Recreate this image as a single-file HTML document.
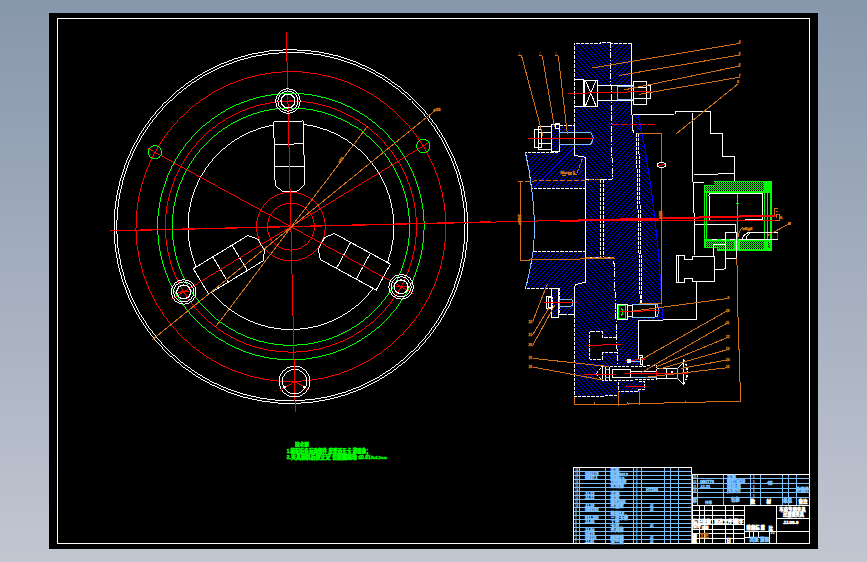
<!DOCTYPE html>
<html lang="zh"><head><meta charset="utf-8"><title>CAD drawing</title>
<style>
html,body{margin:0;padding:0;}
body{width:867px;height:562px;overflow:hidden;background:linear-gradient(#8797ac,#c2c6d1);font-family:"Liberation Sans","Noto Sans CJK SC",sans-serif;}
svg{display:block;}
text{font-family:"Liberation Sans","Noto Sans CJK SC",sans-serif;}
</style></head><body>
<svg shape-rendering="crispEdges" width="867" height="562" viewBox="0 0 867 562">
<defs>
<linearGradient id="bg" x1="0" y1="0" x2="0" y2="1"><stop offset="0" stop-color="#8797ac"/><stop offset="1" stop-color="#c2c6d1"/></linearGradient>
<pattern id="hG" width="2" height="2" patternUnits="userSpaceOnUse"><rect width="2" height="2" fill="#00ff00"/><rect width="1" height="1" fill="#000"/><rect x="1" y="1" width="1" height="1" fill="#000"/></pattern>
</defs>
<rect width="867" height="562" fill="url(#bg)"/>
<rect x="49" y="13" width="769" height="536" fill="#000"/>
<rect x="57.5" y="18.5" width="752" height="525" fill="none" stroke="#fff" stroke-width="1"/>
<g transform="rotate(-1.35 290.9 226.6)">
<circle cx="290.90" cy="226.60" r="176.90" fill="none" stroke="#ffffff" stroke-width="1"/>
<circle cx="290.90" cy="226.60" r="174.20" fill="none" stroke="#ffffff" stroke-width="1"/>
<circle cx="290.90" cy="226.60" r="155.00" fill="none" stroke="#ff0000" stroke-width="1"/>
<circle cx="290.90" cy="226.60" r="133.30" fill="none" stroke="#00ff00" stroke-width="1"/>
<circle cx="290.90" cy="226.60" r="125.60" fill="none" stroke="#ff0000" stroke-width="1"/>
<circle cx="290.90" cy="226.60" r="118.70" fill="none" stroke="#00ff00" stroke-width="1"/>
<circle cx="290.90" cy="226.60" r="34.40" fill="none" stroke="#ff0000" stroke-width="1"/>
<circle cx="290.90" cy="226.60" r="23.50" fill="none" stroke="#ff0000" stroke-width="1"/>
<path d="M276.10,124.67 A103.0,103.0 0 0 0 195.23,264.75" fill="none" stroke="#ffffff" stroke-width="1" />
<path d="M210.03,290.38 A103.0,103.0 0 0 0 371.77,290.38" fill="none" stroke="#ffffff" stroke-width="1" />
<path d="M386.57,264.75 A103.0,103.0 0 0 0 305.70,124.67" fill="none" stroke="#ffffff" stroke-width="1" />
<g transform="rotate(0 290.9 226.6)">
<polygon points="284.40,191.80 276.10,185.10 276.10,121.30 305.70,121.30 305.70,185.10 297.40,191.80" fill="none" stroke="#ffffff" stroke-width="1" />
<line x1="276.10" y1="144.10" x2="305.70" y2="144.10" stroke="#ffffff" stroke-width="1" />
<line x1="276.10" y1="166.60" x2="305.70" y2="166.60" stroke="#ffffff" stroke-width="1" />
</g>
<g transform="rotate(120 290.9 226.6)">
<polygon points="284.40,191.80 276.10,185.10 276.10,121.30 305.70,121.30 305.70,185.10 297.40,191.80" fill="none" stroke="#ffffff" stroke-width="1" />
<line x1="276.10" y1="144.10" x2="305.70" y2="144.10" stroke="#ffffff" stroke-width="1" />
<line x1="276.10" y1="166.60" x2="305.70" y2="166.60" stroke="#ffffff" stroke-width="1" />
</g>
<g transform="rotate(240 290.9 226.6)">
<polygon points="284.40,191.80 276.10,185.10 276.10,121.30 305.70,121.30 305.70,185.10 297.40,191.80" fill="none" stroke="#ffffff" stroke-width="1" />
<line x1="276.10" y1="144.10" x2="305.70" y2="144.10" stroke="#ffffff" stroke-width="1" />
<line x1="276.10" y1="166.60" x2="305.70" y2="166.60" stroke="#ffffff" stroke-width="1" />
</g>
<line x1="109.90" y1="226.60" x2="490.90" y2="226.60" stroke="#ff0000" stroke-width="1.3" />
<line x1="290.90" y1="31.60" x2="290.90" y2="411.60" stroke="#ff0000" stroke-width="1" />
<line x1="149.74" y1="145.10" x2="412.14" y2="296.60" stroke="#ff0000" stroke-width="1" />
<line x1="169.66" y1="296.60" x2="432.06" y2="145.10" stroke="#ff0000" stroke-width="1" />
<circle cx="425.13" cy="149.10" r="6.70" fill="none" stroke="#00ff00" stroke-width="1"/>
<circle cx="156.67" cy="149.10" r="6.70" fill="none" stroke="#00ff00" stroke-width="1"/>
<circle cx="290.90" cy="381.60" r="15.50" fill="none" stroke="#ffffff" stroke-width="1"/>
<circle cx="290.90" cy="381.60" r="12.30" fill="none" stroke="#ffffff" stroke-width="1"/>
<line x1="290.90" y1="381.60" x2="290.90" y2="364.60" stroke="#ff0000" stroke-width="1" />
<line x1="290.90" y1="381.60" x2="276.18" y2="390.10" stroke="#ff0000" stroke-width="1" />
<line x1="290.90" y1="381.60" x2="305.62" y2="390.10" stroke="#ff0000" stroke-width="1" />
<line x1="282.24" y1="386.60" x2="280.07" y2="387.85" stroke="#ffffff" stroke-width="2" />
<line x1="299.56" y1="386.60" x2="301.73" y2="387.85" stroke="#ffffff" stroke-width="2" />
<circle cx="290.90" cy="101.00" r="12.30" fill="none" stroke="#ffffff" stroke-width="1"/>
<circle cx="290.90" cy="101.00" r="10.10" fill="none" stroke="#ffffff" stroke-width="1"/>
<circle cx="290.90" cy="101.00" r="6.90" fill="none" stroke="#ffffff" stroke-width="1.3"/>
<line x1="285.40" y1="101.00" x2="296.40" y2="101.00" stroke="#ff0000" stroke-width="1" />
<circle cx="182.13" cy="289.40" r="12.30" fill="none" stroke="#ffffff" stroke-width="1"/>
<circle cx="182.13" cy="289.40" r="10.10" fill="none" stroke="#ffffff" stroke-width="1"/>
<circle cx="182.13" cy="289.40" r="6.90" fill="none" stroke="#ffffff" stroke-width="1.3"/>
<line x1="176.63" y1="289.40" x2="187.63" y2="289.40" stroke="#ff0000" stroke-width="1" />
<circle cx="399.67" cy="289.40" r="12.30" fill="none" stroke="#ffffff" stroke-width="1"/>
<circle cx="399.67" cy="289.40" r="10.10" fill="none" stroke="#ffffff" stroke-width="1"/>
<circle cx="399.67" cy="289.40" r="6.90" fill="none" stroke="#ffffff" stroke-width="1.3"/>
<line x1="394.17" y1="289.40" x2="405.17" y2="289.40" stroke="#ff0000" stroke-width="1" />
</g>
<line x1="367.50" y1="126.25" x2="215.50" y2="327.00" stroke="#d07018" stroke-width="1" />
<line x1="436.25" y1="109.50" x2="152.00" y2="340.00" stroke="#d07018" stroke-width="1" />
<text x="337.5" y="163" fill="#d07018" stroke="#d07018" stroke-width="0.4" font-size="3.6" font-weight="bold" transform="rotate(-53 339 161)">ø25</text>
<text x="433.5" y="111" fill="#d07018" stroke="#d07018" stroke-width="0.45" font-size="4" font-weight="bold">ø35</text>
<text x="295.00" y="446.00" fill="#00ff00" stroke="#00ff00" stroke-width="0.45" font-size="4.6" font-weight="bold" >技术要</text>
<text x="286.80" y="452.60" fill="#00ff00" stroke="#00ff00" stroke-width="0.55" font-size="6" font-weight="bold" textLength="84" lengthAdjust="spacingAndGlyphs">1.装配后各运动部件 应灵活无卡 滞现象；</text>
<text x="286.80" y="458.60" fill="#00ff00" stroke="#00ff00" stroke-width="0.55" font-size="6" font-weight="bold" textLength="84" lengthAdjust="spacingAndGlyphs">2.夹具装机后校正定 位面圆跳动 ≤0.01</text>
<text x="371.00" y="458.80" fill="#00ff00" stroke="#00ff00" stroke-width="0.3" font-size="3.6" font-weight="bold" >Ra3.2mm</text>
<clipPath id="cp1"><path d="M559.2,125.7 L574,125.7 L574,155.3 L585.5,157.2 L585.5,188.1 L531.5,188.1 Q529.5,170 525.3,152.2 L559.2,152.2 Z"/></clipPath>
<path d="M524.30,124.70h1.0L460.90,189.10h-1.0ZM528.80,124.70h1.0L465.40,189.10h-1.0ZM533.30,124.70h1.0L469.90,189.10h-1.0ZM537.80,124.70h1.0L474.40,189.10h-1.0ZM542.30,124.70h1.0L478.90,189.10h-1.0ZM546.80,124.70h1.0L483.40,189.10h-1.0ZM551.30,124.70h1.0L487.90,189.10h-1.0ZM555.80,124.70h1.0L492.40,189.10h-1.0ZM560.30,124.70h1.0L496.90,189.10h-1.0ZM564.80,124.70h1.0L501.40,189.10h-1.0ZM569.30,124.70h1.0L505.90,189.10h-1.0ZM573.80,124.70h1.0L510.40,189.10h-1.0ZM578.30,124.70h1.0L514.90,189.10h-1.0ZM582.80,124.70h1.0L519.40,189.10h-1.0ZM587.30,124.70h1.0L523.90,189.10h-1.0ZM591.80,124.70h1.0L528.40,189.10h-1.0ZM596.30,124.70h1.0L532.90,189.10h-1.0ZM600.80,124.70h1.0L537.40,189.10h-1.0ZM605.30,124.70h1.0L541.90,189.10h-1.0ZM609.80,124.70h1.0L546.40,189.10h-1.0ZM614.30,124.70h1.0L550.90,189.10h-1.0ZM618.80,124.70h1.0L555.40,189.10h-1.0ZM623.30,124.70h1.0L559.90,189.10h-1.0ZM627.80,124.70h1.0L564.40,189.10h-1.0ZM632.30,124.70h1.0L568.90,189.10h-1.0ZM636.80,124.70h1.0L573.40,189.10h-1.0ZM641.30,124.70h1.0L577.90,189.10h-1.0ZM645.80,124.70h1.0L582.40,189.10h-1.0ZM650.30,124.70h1.0L586.90,189.10h-1.0Z" fill="#0000ff" stroke="none" clip-path="url(#cp1)"/>
<clipPath id="cp2"><path d="M533,251.8 L585.5,251.8 L585.5,282.3 L575.8,284.5 L574,288 L574,314.5 L559.2,314.5 L559.2,288.3 L525.5,288.3 Q530.5,270 533,251.8 Z"/></clipPath>
<path d="M524.50,250.80h1.0L460.80,315.50h-1.0ZM529.00,250.80h1.0L465.30,315.50h-1.0ZM533.50,250.80h1.0L469.80,315.50h-1.0ZM538.00,250.80h1.0L474.30,315.50h-1.0ZM542.50,250.80h1.0L478.80,315.50h-1.0ZM547.00,250.80h1.0L483.30,315.50h-1.0ZM551.50,250.80h1.0L487.80,315.50h-1.0ZM556.00,250.80h1.0L492.30,315.50h-1.0ZM560.50,250.80h1.0L496.80,315.50h-1.0ZM565.00,250.80h1.0L501.30,315.50h-1.0ZM569.50,250.80h1.0L505.80,315.50h-1.0ZM574.00,250.80h1.0L510.30,315.50h-1.0ZM578.50,250.80h1.0L514.80,315.50h-1.0ZM583.00,250.80h1.0L519.30,315.50h-1.0ZM587.50,250.80h1.0L523.80,315.50h-1.0ZM592.00,250.80h1.0L528.30,315.50h-1.0ZM596.50,250.80h1.0L532.80,315.50h-1.0ZM601.00,250.80h1.0L537.30,315.50h-1.0ZM605.50,250.80h1.0L541.80,315.50h-1.0ZM610.00,250.80h1.0L546.30,315.50h-1.0ZM614.50,250.80h1.0L550.80,315.50h-1.0ZM619.00,250.80h1.0L555.30,315.50h-1.0ZM623.50,250.80h1.0L559.80,315.50h-1.0ZM628.00,250.80h1.0L564.30,315.50h-1.0ZM632.50,250.80h1.0L568.80,315.50h-1.0ZM637.00,250.80h1.0L573.30,315.50h-1.0ZM641.50,250.80h1.0L577.80,315.50h-1.0ZM646.00,250.80h1.0L582.30,315.50h-1.0ZM650.50,250.80h1.0L586.80,315.50h-1.0Z" fill="#0000ff" stroke="none" clip-path="url(#cp2)"/>
<clipPath id="cp3"><path d="M574.00,43.30 L600.00,43.30 L600.00,42.00 L610.40,42.00 L612.30,179.40 L600.90,179.40 L600.90,257.40 L613.80,257.40 L618.50,395.50 L574.50,397.00 L574.00,288.00 L575.80,284.50 L585.50,282.30 L585.50,157.20 L574.00,155.30 Z"/></clipPath>
<path d="M216.00,41.00h1.0L574.00,398.00h-1.0ZM220.50,41.00h1.0L578.50,398.00h-1.0ZM225.00,41.00h1.0L583.00,398.00h-1.0ZM229.50,41.00h1.0L587.50,398.00h-1.0ZM234.00,41.00h1.0L592.00,398.00h-1.0ZM238.50,41.00h1.0L596.50,398.00h-1.0ZM243.00,41.00h1.0L601.00,398.00h-1.0ZM247.50,41.00h1.0L605.50,398.00h-1.0ZM252.00,41.00h1.0L610.00,398.00h-1.0ZM256.50,41.00h1.0L614.50,398.00h-1.0ZM261.00,41.00h1.0L619.00,398.00h-1.0ZM265.50,41.00h1.0L623.50,398.00h-1.0ZM270.00,41.00h1.0L628.00,398.00h-1.0ZM274.50,41.00h1.0L632.50,398.00h-1.0ZM279.00,41.00h1.0L637.00,398.00h-1.0ZM283.50,41.00h1.0L641.50,398.00h-1.0ZM288.00,41.00h1.0L646.00,398.00h-1.0ZM292.50,41.00h1.0L650.50,398.00h-1.0ZM297.00,41.00h1.0L655.00,398.00h-1.0ZM301.50,41.00h1.0L659.50,398.00h-1.0ZM306.00,41.00h1.0L664.00,398.00h-1.0ZM310.50,41.00h1.0L668.50,398.00h-1.0ZM315.00,41.00h1.0L673.00,398.00h-1.0ZM319.50,41.00h1.0L677.50,398.00h-1.0ZM324.00,41.00h1.0L682.00,398.00h-1.0ZM328.50,41.00h1.0L686.50,398.00h-1.0ZM333.00,41.00h1.0L691.00,398.00h-1.0ZM337.50,41.00h1.0L695.50,398.00h-1.0ZM342.00,41.00h1.0L700.00,398.00h-1.0ZM346.50,41.00h1.0L704.50,398.00h-1.0ZM351.00,41.00h1.0L709.00,398.00h-1.0ZM355.50,41.00h1.0L713.50,398.00h-1.0ZM360.00,41.00h1.0L718.00,398.00h-1.0ZM364.50,41.00h1.0L722.50,398.00h-1.0ZM369.00,41.00h1.0L727.00,398.00h-1.0ZM373.50,41.00h1.0L731.50,398.00h-1.0ZM378.00,41.00h1.0L736.00,398.00h-1.0ZM382.50,41.00h1.0L740.50,398.00h-1.0ZM387.00,41.00h1.0L745.00,398.00h-1.0ZM391.50,41.00h1.0L749.50,398.00h-1.0ZM396.00,41.00h1.0L754.00,398.00h-1.0ZM400.50,41.00h1.0L758.50,398.00h-1.0ZM405.00,41.00h1.0L763.00,398.00h-1.0ZM409.50,41.00h1.0L767.50,398.00h-1.0ZM414.00,41.00h1.0L772.00,398.00h-1.0ZM418.50,41.00h1.0L776.50,398.00h-1.0ZM423.00,41.00h1.0L781.00,398.00h-1.0ZM427.50,41.00h1.0L785.50,398.00h-1.0ZM432.00,41.00h1.0L790.00,398.00h-1.0ZM436.50,41.00h1.0L794.50,398.00h-1.0ZM441.00,41.00h1.0L799.00,398.00h-1.0ZM445.50,41.00h1.0L803.50,398.00h-1.0ZM450.00,41.00h1.0L808.00,398.00h-1.0ZM454.50,41.00h1.0L812.50,398.00h-1.0ZM459.00,41.00h1.0L817.00,398.00h-1.0ZM463.50,41.00h1.0L821.50,398.00h-1.0ZM468.00,41.00h1.0L826.00,398.00h-1.0ZM472.50,41.00h1.0L830.50,398.00h-1.0ZM477.00,41.00h1.0L835.00,398.00h-1.0ZM481.50,41.00h1.0L839.50,398.00h-1.0ZM486.00,41.00h1.0L844.00,398.00h-1.0ZM490.50,41.00h1.0L848.50,398.00h-1.0ZM495.00,41.00h1.0L853.00,398.00h-1.0ZM499.50,41.00h1.0L857.50,398.00h-1.0ZM504.00,41.00h1.0L862.00,398.00h-1.0ZM508.50,41.00h1.0L866.50,398.00h-1.0ZM513.00,41.00h1.0L871.00,398.00h-1.0ZM517.50,41.00h1.0L875.50,398.00h-1.0ZM522.00,41.00h1.0L880.00,398.00h-1.0ZM526.50,41.00h1.0L884.50,398.00h-1.0ZM531.00,41.00h1.0L889.00,398.00h-1.0ZM535.50,41.00h1.0L893.50,398.00h-1.0ZM540.00,41.00h1.0L898.00,398.00h-1.0ZM544.50,41.00h1.0L902.50,398.00h-1.0ZM549.00,41.00h1.0L907.00,398.00h-1.0ZM553.50,41.00h1.0L911.50,398.00h-1.0ZM558.00,41.00h1.0L916.00,398.00h-1.0ZM562.50,41.00h1.0L920.50,398.00h-1.0ZM567.00,41.00h1.0L925.00,398.00h-1.0ZM571.50,41.00h1.0L929.50,398.00h-1.0ZM576.00,41.00h1.0L934.00,398.00h-1.0ZM580.50,41.00h1.0L938.50,398.00h-1.0ZM585.00,41.00h1.0L943.00,398.00h-1.0ZM589.50,41.00h1.0L947.50,398.00h-1.0ZM594.00,41.00h1.0L952.00,398.00h-1.0ZM598.50,41.00h1.0L956.50,398.00h-1.0ZM603.00,41.00h1.0L961.00,398.00h-1.0ZM607.50,41.00h1.0L965.50,398.00h-1.0ZM612.00,41.00h1.0L970.00,398.00h-1.0ZM616.50,41.00h1.0L974.50,398.00h-1.0Z" fill="#0000ff" stroke="none" clip-path="url(#cp3)"/>
<clipPath id="cp4"><path d="M610.40,43.30 L631.70,43.30 L632.00,115.00 L633.20,133.30 L636.00,133.30 L640.40,320.00 L638.80,320.00 L638.80,365.50 L617.60,365.50 L613.80,257.40 L603.70,257.40 L603.70,179.40 L612.30,179.40 Z"/></clipPath>
<path d="M602.70,42.30h1.0L279.50,366.50h-1.0ZM607.20,42.30h1.0L284.00,366.50h-1.0ZM611.70,42.30h1.0L288.50,366.50h-1.0ZM616.20,42.30h1.0L293.00,366.50h-1.0ZM620.70,42.30h1.0L297.50,366.50h-1.0ZM625.20,42.30h1.0L302.00,366.50h-1.0ZM629.70,42.30h1.0L306.50,366.50h-1.0ZM634.20,42.30h1.0L311.00,366.50h-1.0ZM638.70,42.30h1.0L315.50,366.50h-1.0ZM643.20,42.30h1.0L320.00,366.50h-1.0ZM647.70,42.30h1.0L324.50,366.50h-1.0ZM652.20,42.30h1.0L329.00,366.50h-1.0ZM656.70,42.30h1.0L333.50,366.50h-1.0ZM661.20,42.30h1.0L338.00,366.50h-1.0ZM665.70,42.30h1.0L342.50,366.50h-1.0ZM670.20,42.30h1.0L347.00,366.50h-1.0ZM674.70,42.30h1.0L351.50,366.50h-1.0ZM679.20,42.30h1.0L356.00,366.50h-1.0ZM683.70,42.30h1.0L360.50,366.50h-1.0ZM688.20,42.30h1.0L365.00,366.50h-1.0ZM692.70,42.30h1.0L369.50,366.50h-1.0ZM697.20,42.30h1.0L374.00,366.50h-1.0ZM701.70,42.30h1.0L378.50,366.50h-1.0ZM706.20,42.30h1.0L383.00,366.50h-1.0ZM710.70,42.30h1.0L387.50,366.50h-1.0ZM715.20,42.30h1.0L392.00,366.50h-1.0ZM719.70,42.30h1.0L396.50,366.50h-1.0ZM724.20,42.30h1.0L401.00,366.50h-1.0ZM728.70,42.30h1.0L405.50,366.50h-1.0ZM733.20,42.30h1.0L410.00,366.50h-1.0ZM737.70,42.30h1.0L414.50,366.50h-1.0ZM742.20,42.30h1.0L419.00,366.50h-1.0ZM746.70,42.30h1.0L423.50,366.50h-1.0ZM751.20,42.30h1.0L428.00,366.50h-1.0ZM755.70,42.30h1.0L432.50,366.50h-1.0ZM760.20,42.30h1.0L437.00,366.50h-1.0ZM764.70,42.30h1.0L441.50,366.50h-1.0ZM769.20,42.30h1.0L446.00,366.50h-1.0ZM773.70,42.30h1.0L450.50,366.50h-1.0ZM778.20,42.30h1.0L455.00,366.50h-1.0ZM782.70,42.30h1.0L459.50,366.50h-1.0ZM787.20,42.30h1.0L464.00,366.50h-1.0ZM791.70,42.30h1.0L468.50,366.50h-1.0ZM796.20,42.30h1.0L473.00,366.50h-1.0ZM800.70,42.30h1.0L477.50,366.50h-1.0ZM805.20,42.30h1.0L482.00,366.50h-1.0ZM809.70,42.30h1.0L486.50,366.50h-1.0ZM814.20,42.30h1.0L491.00,366.50h-1.0ZM818.70,42.30h1.0L495.50,366.50h-1.0ZM823.20,42.30h1.0L500.00,366.50h-1.0ZM827.70,42.30h1.0L504.50,366.50h-1.0ZM832.20,42.30h1.0L509.00,366.50h-1.0ZM836.70,42.30h1.0L513.50,366.50h-1.0ZM841.20,42.30h1.0L518.00,366.50h-1.0ZM845.70,42.30h1.0L522.50,366.50h-1.0ZM850.20,42.30h1.0L527.00,366.50h-1.0ZM854.70,42.30h1.0L531.50,366.50h-1.0ZM859.20,42.30h1.0L536.00,366.50h-1.0ZM863.70,42.30h1.0L540.50,366.50h-1.0ZM868.20,42.30h1.0L545.00,366.50h-1.0ZM872.70,42.30h1.0L549.50,366.50h-1.0ZM877.20,42.30h1.0L554.00,366.50h-1.0ZM881.70,42.30h1.0L558.50,366.50h-1.0ZM886.20,42.30h1.0L563.00,366.50h-1.0ZM890.70,42.30h1.0L567.50,366.50h-1.0ZM895.20,42.30h1.0L572.00,366.50h-1.0ZM899.70,42.30h1.0L576.50,366.50h-1.0ZM904.20,42.30h1.0L581.00,366.50h-1.0ZM908.70,42.30h1.0L585.50,366.50h-1.0ZM913.20,42.30h1.0L590.00,366.50h-1.0ZM917.70,42.30h1.0L594.50,366.50h-1.0ZM922.20,42.30h1.0L599.00,366.50h-1.0ZM926.70,42.30h1.0L603.50,366.50h-1.0ZM931.20,42.30h1.0L608.00,366.50h-1.0ZM935.70,42.30h1.0L612.50,366.50h-1.0ZM940.20,42.30h1.0L617.00,366.50h-1.0ZM944.70,42.30h1.0L621.50,366.50h-1.0ZM949.20,42.30h1.0L626.00,366.50h-1.0ZM953.70,42.30h1.0L630.50,366.50h-1.0ZM958.20,42.30h1.0L635.00,366.50h-1.0ZM962.70,42.30h1.0L639.50,366.50h-1.0Z" fill="#0000ff" stroke="none" clip-path="url(#cp4)"/>
<clipPath id="cp5"><path d="M618.50,381.00 L645.30,381.00 L645.30,391.00 L618.50,395.50 Z"/></clipPath>
<path d="M617.50,380.00h1.0L602.00,396.50h-1.0ZM622.00,380.00h1.0L606.50,396.50h-1.0ZM626.50,380.00h1.0L611.00,396.50h-1.0ZM631.00,380.00h1.0L615.50,396.50h-1.0ZM635.50,380.00h1.0L620.00,396.50h-1.0ZM640.00,380.00h1.0L624.50,396.50h-1.0ZM644.50,380.00h1.0L629.00,396.50h-1.0ZM649.00,380.00h1.0L633.50,396.50h-1.0ZM653.50,380.00h1.0L638.00,396.50h-1.0ZM658.00,380.00h1.0L642.50,396.50h-1.0ZM662.50,380.00h1.0L647.00,396.50h-1.0Z" fill="#0000ff" stroke="none" clip-path="url(#cp5)"/>
<clipPath id="cp6"><path d="M634,115.5 L638.5,115.5 Q658.4,210 662.6,320.7 L640.4,320.7 L636,133.3 Z"/></clipPath>
<path d="M425.80,114.50h1.0L634.00,321.70h-1.0ZM430.30,114.50h1.0L638.50,321.70h-1.0ZM434.80,114.50h1.0L643.00,321.70h-1.0ZM439.30,114.50h1.0L647.50,321.70h-1.0ZM443.80,114.50h1.0L652.00,321.70h-1.0ZM448.30,114.50h1.0L656.50,321.70h-1.0ZM452.80,114.50h1.0L661.00,321.70h-1.0ZM457.30,114.50h1.0L665.50,321.70h-1.0ZM461.80,114.50h1.0L670.00,321.70h-1.0ZM466.30,114.50h1.0L674.50,321.70h-1.0ZM470.80,114.50h1.0L679.00,321.70h-1.0ZM475.30,114.50h1.0L683.50,321.70h-1.0ZM479.80,114.50h1.0L688.00,321.70h-1.0ZM484.30,114.50h1.0L692.50,321.70h-1.0ZM488.80,114.50h1.0L697.00,321.70h-1.0ZM493.30,114.50h1.0L701.50,321.70h-1.0ZM497.80,114.50h1.0L706.00,321.70h-1.0ZM502.30,114.50h1.0L710.50,321.70h-1.0ZM506.80,114.50h1.0L715.00,321.70h-1.0ZM511.30,114.50h1.0L719.50,321.70h-1.0ZM515.80,114.50h1.0L724.00,321.70h-1.0ZM520.30,114.50h1.0L728.50,321.70h-1.0ZM524.80,114.50h1.0L733.00,321.70h-1.0ZM529.30,114.50h1.0L737.50,321.70h-1.0ZM533.80,114.50h1.0L742.00,321.70h-1.0ZM538.30,114.50h1.0L746.50,321.70h-1.0ZM542.80,114.50h1.0L751.00,321.70h-1.0ZM547.30,114.50h1.0L755.50,321.70h-1.0ZM551.80,114.50h1.0L760.00,321.70h-1.0ZM556.30,114.50h1.0L764.50,321.70h-1.0ZM560.80,114.50h1.0L769.00,321.70h-1.0ZM565.30,114.50h1.0L773.50,321.70h-1.0ZM569.80,114.50h1.0L778.00,321.70h-1.0ZM574.30,114.50h1.0L782.50,321.70h-1.0ZM578.80,114.50h1.0L787.00,321.70h-1.0ZM583.30,114.50h1.0L791.50,321.70h-1.0ZM587.80,114.50h1.0L796.00,321.70h-1.0ZM592.30,114.50h1.0L800.50,321.70h-1.0ZM596.80,114.50h1.0L805.00,321.70h-1.0ZM601.30,114.50h1.0L809.50,321.70h-1.0ZM605.80,114.50h1.0L814.00,321.70h-1.0ZM610.30,114.50h1.0L818.50,321.70h-1.0ZM614.80,114.50h1.0L823.00,321.70h-1.0ZM619.30,114.50h1.0L827.50,321.70h-1.0ZM623.80,114.50h1.0L832.00,321.70h-1.0ZM628.30,114.50h1.0L836.50,321.70h-1.0ZM632.80,114.50h1.0L841.00,321.70h-1.0ZM637.30,114.50h1.0L845.50,321.70h-1.0ZM641.80,114.50h1.0L850.00,321.70h-1.0ZM646.30,114.50h1.0L854.50,321.70h-1.0ZM650.80,114.50h1.0L859.00,321.70h-1.0ZM655.30,114.50h1.0L863.50,321.70h-1.0ZM659.80,114.50h1.0L868.00,321.70h-1.0Z" fill="#0000ff" stroke="none" clip-path="url(#cp6)"/>
<rect x="574.00" y="79.00" width="23.10" height="27.80" fill="#000"/>
<rect x="597.00" y="85.10" width="36.00" height="14.90" fill="#000"/>
<rect x="574.00" y="132.20" width="16.70" height="12.10" fill="#000"/>
<rect x="559.20" y="132.20" width="14.80" height="12.10" fill="#000"/>
<rect x="589.70" y="331.40" width="13.00" height="28.10" fill="#000"/>
<rect x="602.70" y="337.40" width="14.30" height="14.70" fill="#000"/>
<rect x="559.20" y="299.40" width="16.80" height="6.60" fill="#000"/>
<rect x="632.00" y="304.00" width="26.00" height="13.00" fill="#000"/>
<rect x="619.00" y="304.00" width="13.00" height="14.00" fill="#000"/>
<rect x="597.00" y="366.00" width="93.00" height="15.00" fill="#000"/>
<path d="M559.2,125.7 L574,125.7 L574,155.3 L585.5,157.2 L585.5,188.1 L531.5,188.1 Q529.5,170 525.3,152.2 L559.2,152.2" fill="none" stroke="#ffffff" stroke-width="1" stroke-dasharray="3.5 1"/>
<path d="M533,251.8 L585.5,251.8 L585.5,282.3 L575.8,284.5 L574,288 L574,314.5 L559.2,314.5 L559.2,288.3 L525.5,288.3 Q530.5,270 533,251.8" fill="none" stroke="#ffffff" stroke-width="1" stroke-dasharray="3.5 1"/>
<path d="M525.3,152.2 Q529.5,170 531.5,188.1 Q536.5,220 533,251.8 Q530.5,270 525.5,288.3" fill="none" stroke="#7cc0ff" stroke-width="1" />
<polyline points="585.50,157.20 574.00,155.30 574.00,43.30 600.00,43.30 600.00,42.00 610.40,42.00 610.40,43.30 631.70,43.30" fill="none" stroke="#ffffff" stroke-width="1" stroke-dasharray="3.5 1"/>
<line x1="631.70" y1="43.30" x2="632.00" y2="115.00" stroke="#ffffff" stroke-width="1" />
<polyline points="574.00,288.00 574.50,397.00 618.50,395.50 618.50,391.00" fill="none" stroke="#ffffff" stroke-width="1" stroke-dasharray="3.5 1"/>
<polyline points="574.00,155.30 585.50,157.20 585.50,282.30 575.80,284.50 574.00,288.00" fill="none" stroke="#ffffff" stroke-width="1" />
<line x1="610.40" y1="42.00" x2="612.30" y2="179.40" stroke="#ffffff" stroke-width="1" stroke-dasharray="6 1.5 1.5 1.5"/>
<polyline points="585.50,179.40 612.80,179.40" fill="none" stroke="#ffffff" stroke-width="1" stroke-dasharray="3.5 1"/>
<line x1="600.90" y1="179.40" x2="600.90" y2="257.40" stroke="#ffffff" stroke-width="1" stroke-dasharray="3.5 1"/>
<line x1="603.70" y1="179.40" x2="603.70" y2="257.40" stroke="#ffffff" stroke-width="1" stroke-dasharray="3.5 1"/>
<polyline points="585.50,257.40 613.80,257.40 617.60,365.50" fill="none" stroke="#ffffff" stroke-width="1" stroke-dasharray="6 1.5 1.5 1.5"/>
<line x1="618.00" y1="382.00" x2="618.50" y2="395.50" stroke="#ffffff" stroke-width="1" stroke-dasharray="3.5 1"/>
<line x1="585.50" y1="257.40" x2="613.80" y2="257.40" stroke="#d07018" stroke-width="1" stroke-dasharray="4 2"/>
<polyline points="632.00,115.00 633.20,133.30" fill="none" stroke="#ffffff" stroke-width="1" />
<line x1="636.20" y1="133.30" x2="640.20" y2="303.00" stroke="#ffffff" stroke-width="1" stroke-dasharray="3.5 1"/>
<line x1="638.60" y1="133.30" x2="642.00" y2="303.00" stroke="#ffffff" stroke-width="1" stroke-dasharray="3.5 1"/>
<path d="M638.5,115.5 Q658.4,210 662.6,320.7" fill="none" stroke="#0000ff" stroke-width="1" />
<line x1="638.80" y1="320.00" x2="638.80" y2="360.00" stroke="#ffffff" stroke-width="1" />
<polyline points="574.00,79.00 583.30,79.00 583.30,106.80 574.00,106.80" fill="none" stroke="#ffffff" stroke-width="1" />
<rect x="584.20" y="80.00" width="12.90" height="26.20" fill="none" stroke="#ffffff" stroke-width="1" />
<line x1="585.50" y1="80.50" x2="596.00" y2="105.80" stroke="#ffffff" stroke-width="1" />
<line x1="596.00" y1="80.50" x2="585.50" y2="105.80" stroke="#ffffff" stroke-width="1" />
<line x1="597.00" y1="85.10" x2="633.00" y2="85.10" stroke="#ffffff" stroke-width="1" />
<line x1="597.00" y1="100.00" x2="633.00" y2="100.00" stroke="#ffffff" stroke-width="1" />
<line x1="617.50" y1="85.10" x2="617.50" y2="100.00" stroke="#ffffff" stroke-width="1" />
<rect x="617.50" y="86.00" width="15.50" height="13.00" fill="none" stroke="#7cc0ff" stroke-width="1" />
<polygon points="633.00,81.80 646.00,81.80 646.00,104.00 633.00,104.00" fill="none" stroke="#ffffff" stroke-width="1" />
<polyline points="646.00,85.50 650.00,85.50 650.00,98.50 646.00,98.50" fill="none" stroke="#ffffff" stroke-width="1" />
<line x1="633.00" y1="87.50" x2="646.00" y2="87.50" stroke="#ffffff" stroke-width="1" />
<line x1="633.00" y1="98.00" x2="646.00" y2="98.00" stroke="#ffffff" stroke-width="1" />
<line x1="568.00" y1="93.50" x2="651.70" y2="91.40" stroke="#ff0000" stroke-width="1" />
<line x1="612.00" y1="125.00" x2="654.80" y2="124.20" stroke="#ff0000" stroke-width="1" stroke-dasharray="7 2"/>
<rect x="534.50" y="129.00" width="7.00" height="18.00" fill="none" stroke="#ffffff" stroke-width="1" />
<rect x="538.50" y="126.50" width="12.50" height="22.50" fill="none" stroke="#ffffff" stroke-width="1" />
<line x1="538.50" y1="132.00" x2="551.00" y2="132.00" stroke="#ffffff" stroke-width="1" />
<line x1="538.50" y1="143.50" x2="551.00" y2="143.50" stroke="#ffffff" stroke-width="1" />
<clipPath id="cp7"><path d="M551.80,124.00 L559.20,124.00 L559.20,151.70 L551.80,151.70 Z"/></clipPath>
<path d="M550.80,123.00h1.0L522.10,152.70h-1.0ZM555.30,123.00h1.0L526.60,152.70h-1.0ZM559.80,123.00h1.0L531.10,152.70h-1.0ZM564.30,123.00h1.0L535.60,152.70h-1.0ZM568.80,123.00h1.0L540.10,152.70h-1.0ZM573.30,123.00h1.0L544.60,152.70h-1.0ZM577.80,123.00h1.0L549.10,152.70h-1.0ZM582.30,123.00h1.0L553.60,152.70h-1.0ZM586.80,123.00h1.0L558.10,152.70h-1.0Z" fill="#0000ff" stroke="none" clip-path="url(#cp7)"/>
<rect x="551.80" y="124.00" width="7.40" height="27.70" fill="none" stroke="#ffffff" stroke-width="1" />
<rect x="555.00" y="123.00" width="4.00" height="5.00" fill="none" stroke="#ffffff" stroke-width="1" />
<polygon points="559.20,132.20 590.70,132.20 593.50,138.20 590.70,144.30 559.20,144.30" fill="none" stroke="#7cc0ff" stroke-width="1" />
<line x1="574.00" y1="132.20" x2="574.00" y2="144.30" stroke="#ffffff" stroke-width="1" />
<line x1="528.00" y1="138.60" x2="594.00" y2="138.20" stroke="#ff0000" stroke-width="1" />
<rect x="546.30" y="296.30" width="5.20" height="12.40" fill="none" stroke="#ffffff" stroke-width="1" />
<rect x="548.50" y="297.50" width="3.50" height="10.00" fill="none" stroke="#ffffff" stroke-width="1" />
<clipPath id="cp8"><path d="M551.80,288.30 L558.60,288.30 L558.60,317.20 L551.80,317.20 Z"/></clipPath>
<path d="M550.80,287.30h1.0L520.90,318.20h-1.0ZM555.30,287.30h1.0L525.40,318.20h-1.0ZM559.80,287.30h1.0L529.90,318.20h-1.0ZM564.30,287.30h1.0L534.40,318.20h-1.0ZM568.80,287.30h1.0L538.90,318.20h-1.0ZM573.30,287.30h1.0L543.40,318.20h-1.0ZM577.80,287.30h1.0L547.90,318.20h-1.0ZM582.30,287.30h1.0L552.40,318.20h-1.0ZM586.80,287.30h1.0L556.90,318.20h-1.0Z" fill="#0000ff" stroke="none" clip-path="url(#cp8)"/>
<rect x="551.50" y="288.30" width="7.10" height="28.90" fill="none" stroke="#ffffff" stroke-width="1" />
<polygon points="559.20,299.40 571.30,299.40 572.50,300.50 572.50,305.00 571.30,306.00 559.20,306.00" fill="none" stroke="#7cc0ff" stroke-width="1" />
<line x1="544.00" y1="302.40" x2="577.00" y2="302.20" stroke="#ff0000" stroke-width="1" />
<line x1="559.20" y1="314.50" x2="574.00" y2="314.50" stroke="#ffffff" stroke-width="1" stroke-dasharray="3.5 1"/>
<line x1="574.00" y1="288.00" x2="574.00" y2="314.50" stroke="#ffffff" stroke-width="1" />
<path d="M591.5,331.4 L601,331.4 Q602.7,331.4 602.7,333 L602.7,337.4 L617,337.4 M617,352.1 L602.7,352.1 L602.7,358 Q602.7,359.5 601,359.5 L591.5,359.5 Q589.7,359.5 589.7,358 L589.7,333 Q589.7,331.4 591.5,331.4" fill="none" stroke="#ffffff" stroke-width="1" stroke-dasharray="3.5 1"/>
<line x1="588.00" y1="345.30" x2="621.00" y2="344.60" stroke="#ff0000" stroke-width="1" />
<polyline points="633.50,114.30 675.50,114.00 675.50,111.50 710.60,111.50 710.60,133.90 722.30,133.90 722.30,156.40 734.70,156.40 734.70,181.00" fill="none" stroke="#ffffff" stroke-width="1" />
<polyline points="692.10,113.00 692.30,163.00 693.80,202.50 694.80,255.50" fill="none" stroke="#ffffff" stroke-width="1" />
<line x1="693.60" y1="174.30" x2="734.70" y2="173.80" stroke="#ffffff" stroke-width="1" />
<line x1="693.60" y1="182.30" x2="705.00" y2="182.00" stroke="#ffffff" stroke-width="1" />
<line x1="694.80" y1="224.60" x2="735.50" y2="224.20" stroke="#ffffff" stroke-width="1" />
<line x1="735.50" y1="224.20" x2="735.80" y2="233.00" stroke="#ffffff" stroke-width="1" />
<line x1="715.30" y1="133.50" x2="721.80" y2="133.50" stroke="#ffffff" stroke-width="1" />
<polygon points="676.40,255.50 684.40,255.50 684.40,259.60 692.70,259.60 692.70,256.00 714.30,256.00 714.30,281.40 692.70,281.40 692.70,278.50 684.40,278.50 684.40,282.40 676.40,282.40" fill="none" stroke="#ffffff" stroke-width="1" />
<line x1="678.80" y1="255.50" x2="678.80" y2="282.40" stroke="#ffffff" stroke-width="1" />
<polyline points="713.40,256.00 713.40,244.50 725.40,244.50 725.40,268.90 714.30,269.80" fill="none" stroke="#ffffff" stroke-width="1" />
<polyline points="725.40,244.50 725.40,232.50 736.90,232.50 736.90,258.10 725.40,258.10" fill="none" stroke="#ffffff" stroke-width="1" />
<polyline points="696.80,282.40 696.80,319.70 663.00,319.70" fill="none" stroke="#ffffff" stroke-width="1" />
<line x1="638.80" y1="320.30" x2="663.00" y2="320.30" stroke="#ffffff" stroke-width="1" />
<polygon points="704,185 713.8,185 713.8,180.8 771.5,180.8 771.5,192.8 704,192.8" fill="#00ff00"/>
<polygon points="705,239.2 771.5,239.2 771.5,250.8 717,250.8 717,248 705,248" fill="#00ff00"/>
<rect x="705" y="186" width="9" height="5" fill="url(#hG)"/>
<rect x="714" y="182" width="50" height="9" fill="url(#hG)"/>
<rect x="706" y="241" width="28" height="6" fill="url(#hG)"/>
<rect x="718" y="241" width="16" height="8" fill="url(#hG)"/>
<rect x="740" y="241" width="25" height="8" fill="url(#hG)"/>
<rect x="768" y="242" width="2" height="6" fill="url(#hG)"/>
<line x1="704.50" y1="185.00" x2="704.50" y2="248.00" stroke="#00ff00" stroke-width="1" />
<line x1="706.30" y1="191.00" x2="706.30" y2="241.00" stroke="#00ff00" stroke-width="1" />
<line x1="764.70" y1="181.00" x2="764.70" y2="250.00" stroke="#00ff00" stroke-width="1" />
<line x1="767.60" y1="181.00" x2="767.60" y2="250.00" stroke="#00ff00" stroke-width="1" />
<line x1="770.20" y1="181.00" x2="770.20" y2="250.00" stroke="#00ff00" stroke-width="1" />
<line x1="771.20" y1="181.00" x2="771.20" y2="250.00" stroke="#00ff00" stroke-width="1" />
<line x1="737.30" y1="193.00" x2="737.30" y2="248.00" stroke="#00ff00" stroke-width="1.4" />
<line x1="735.80" y1="203.00" x2="738.80" y2="203.00" stroke="#00ff00" stroke-width="1" />
<path d="M709,220.5 L709,195.5 Q709,193.3 711.5,193.3 L760.5,193.3 Q762.7,193.3 762.7,195.5 L762.7,219.4 L745,219.4" fill="none" stroke="#ffffff" stroke-width="1" />
<line x1="712.00" y1="239.80" x2="764.00" y2="239.80" stroke="#ffffff" stroke-width="1" stroke-dasharray="5 4"/>
<polyline points="713.40,256.00 713.40,244.50 725.40,244.50 725.40,268.90 714.30,269.80" fill="none" stroke="#ffffff" stroke-width="1" />
<polyline points="725.40,244.50 725.40,232.50 736.90,232.50 736.90,258.40 725.40,258.40" fill="none" stroke="#ffffff" stroke-width="1" />
<line x1="434.00" y1="223.50" x2="777.00" y2="215.20" stroke="#ff0000" stroke-width="1" />
<line x1="560.00" y1="221.00" x2="775.00" y2="215.60" stroke="#ff0000" stroke-width="2" />
<line x1="600.00" y1="221.00" x2="775.00" y2="220.90" stroke="#ff0000" stroke-width="1" />
<path d="M777.8,232.7 L748,232.7 Q743,235 742.3,239.2 L777.8,239.2" fill="none" stroke="#ffffff" stroke-width="1" />
<path d="M750,233 Q746,236 746,239" fill="none" stroke="#ffffff" stroke-width="1" />
<line x1="777.80" y1="232.70" x2="777.80" y2="239.20" stroke="#ff0000" stroke-width="1" />
<polyline points="778.00,208.40 774.30,208.40 774.30,215.30" fill="none" stroke="#d07018" stroke-width="1" />
<line x1="776.00" y1="211.00" x2="778.00" y2="211.00" stroke="#d07018" stroke-width="1" />
<polyline points="776.00,214.20 779.00,214.20 779.00,220.60 775.00,220.60" fill="none" stroke="#d07018" stroke-width="1" />
<line x1="776.00" y1="214.20" x2="776.00" y2="218.00" stroke="#d07018" stroke-width="1" />
<text x="780" y="219.3" fill="#d07018" stroke="#d07018" stroke-width="0.4" font-size="3.4" font-weight="bold">0.</text>
<line x1="767.40" y1="235.60" x2="789.80" y2="223.30" stroke="#d07018" stroke-width="1" />
<rect x="788.60" y="222.00" width="2.20" height="2.60" fill="#d07018" stroke="#d07018" stroke-width="1" />
<path d="M737.5,239.9 Q738.5,231 742.8,227" fill="none" stroke="#d07018" stroke-width="1" />
<text x="742.5" y="229.6" fill="#d07018" stroke="#d07018" stroke-width="0.5" font-size="4.2" font-weight="bold">ø6g6</text>
<polyline points="636.60,133.70 661.60,133.70 661.60,303.00 638.50,303.00" fill="none" stroke="#d07018" stroke-width="1" />
<ellipse cx="661.6" cy="165" rx="4.2" ry="2.4" fill="#000" stroke="#fff" stroke-width="1"/>
<line x1="658.00" y1="165.30" x2="665.00" y2="164.80" stroke="#ff0000" stroke-width="1" />
<text x="655" y="215.6" fill="#d07018" stroke="#d07018" stroke-width="0.45" font-size="3.6" font-weight="bold" transform="rotate(-90 660 214)">ø190</text>
<rect x="617.30" y="304.00" width="10.50" height="15.80" fill="#000" stroke="#ffffff" stroke-width="1" />
<path d="M618.8,305.8 L625.5,305.8 L625.5,318 L618.8,318 Z M621,308 Q624.5,312 621,316" fill="none" stroke="#00ff00" stroke-width="1" />
<path d="M632,304 L655,304 Q658,304 658,307 L658,314 Q658,317 655,317 L632,317 Z" fill="none" stroke="#7cc0ff" stroke-width="1" />
<rect x="627.40" y="305.50" width="4.60" height="10.50" fill="none" stroke="#ffffff" stroke-width="1" />
<line x1="655.00" y1="304.50" x2="655.00" y2="316.50" stroke="#ffffff" stroke-width="1" />
<line x1="619.00" y1="311.60" x2="660.00" y2="310.60" stroke="#ff0000" stroke-width="1" />
<polyline points="736.90,258.50 737.80,310.00 740.60,401.20" fill="none" stroke="#d07018" stroke-width="1" />
<polyline points="574.50,397.00 574.50,405.00 618.50,404.30 639.40,403.60 740.60,401.20" fill="none" stroke="#d07018" stroke-width="1" />
<line x1="618.50" y1="391.00" x2="618.50" y2="406.00" stroke="#d07018" stroke-width="1" />
<line x1="639.40" y1="391.00" x2="639.40" y2="404.50" stroke="#d07018" stroke-width="1" />
<line x1="627.50" y1="402.00" x2="629.00" y2="404.50" stroke="#d07018" stroke-width="1" />
<line x1="685.60" y1="400.50" x2="685.60" y2="403.00" stroke="#d07018" stroke-width="1" />
<line x1="594.00" y1="402.50" x2="596.00" y2="405.00" stroke="#d07018" stroke-width="1" />
<line x1="638.90" y1="320.00" x2="638.90" y2="355.00" stroke="#ffffff" stroke-width="1" />
<polyline points="638.90,355.00 642.00,355.00 642.00,366.00" fill="none" stroke="#ffffff" stroke-width="1" />
<path d="M596.3,373.7 L602,366.5 L656.6,365.9 L656.6,379.8 L602,380.3 Z" fill="none" stroke="#ffffff" stroke-width="1" stroke-dasharray="3 1.2"/>
<line x1="602.00" y1="367.00" x2="602.00" y2="379.80" stroke="#ffffff" stroke-width="1" />
<line x1="605.20" y1="367.00" x2="605.20" y2="379.80" stroke="#ffffff" stroke-width="1" />
<line x1="609.00" y1="367.00" x2="609.00" y2="379.80" stroke="#ffffff" stroke-width="1" />
<line x1="605.20" y1="369.50" x2="609.00" y2="369.50" stroke="#7cc0ff" stroke-width="1" />
<line x1="605.20" y1="377.50" x2="609.00" y2="377.50" stroke="#7cc0ff" stroke-width="1" />
<rect x="612.20" y="369.00" width="18.40" height="8.90" fill="none" stroke="#ffffff" stroke-width="1" />
<polyline points="630.60,371.00 656.60,371.00" fill="none" stroke="#ffffff" stroke-width="1" />
<line x1="630.60" y1="377.30" x2="656.60" y2="377.30" stroke="#7cc0ff" stroke-width="1" />
<polyline points="656.60,368.40 677.60,368.40 683.30,362.70" fill="none" stroke="#ffffff" stroke-width="1" />
<polyline points="656.60,378.50 677.60,378.50 683.30,384.20" fill="none" stroke="#ffffff" stroke-width="1" />
<line x1="666.80" y1="368.40" x2="666.80" y2="378.50" stroke="#ffffff" stroke-width="1" />
<line x1="677.60" y1="368.40" x2="677.60" y2="378.50" stroke="#7cc0ff" stroke-width="1" />
<rect x="671.00" y="371.50" width="1.80" height="1.80" fill="#ffffff" stroke="#ffffff" stroke-width="1" />
<path d="M683.3,359.5 L683.3,384.9" fill="none" stroke="#ffffff" stroke-width="1" />
<path d="M683.3,359.5 Q691.5,372 683.3,384.9" fill="none" stroke="#ffffff" stroke-width="1.4" stroke-dasharray="3 1"/>
<path d="M685.5,362 L685.5,382.5" fill="none" stroke="#0000ff" stroke-width="1" stroke-dasharray="1.5 1.5"/>
<line x1="625.00" y1="373.50" x2="687.70" y2="373.50" stroke="#ff0000" stroke-width="1.5" />
<line x1="584.00" y1="374.20" x2="616.00" y2="374.00" stroke="#ff0000" stroke-width="1" />
<line x1="656.00" y1="371.00" x2="656.00" y2="377.00" stroke="#ff0000" stroke-width="1" />
<line x1="625.50" y1="360.20" x2="644.60" y2="359.80" stroke="#ff0000" stroke-width="1" />
<rect x="627.80" y="359.00" width="3.00" height="3.00" fill="#ffffff" stroke="#ffffff" stroke-width="1" />
<polyline points="643.30,357.00 640.80,357.00 640.80,364.00 643.30,364.00" fill="none" stroke="#ffffff" stroke-width="1" />
<line x1="631.00" y1="361.80" x2="640.00" y2="361.80" stroke="#7cc0ff" stroke-width="1" />
<polyline points="638.90,381.00 644.60,381.00 644.60,389.30 638.90,389.30 638.90,391.20 618.50,391.20" fill="none" stroke="#ffffff" stroke-width="1" stroke-dasharray="3.5 1"/>
<line x1="626.00" y1="386.60" x2="645.80" y2="386.30" stroke="#ff0000" stroke-width="1" />
<line x1="521.60" y1="56.00" x2="543.00" y2="136.00" stroke="#d07018" stroke-width="1" />
<line x1="518.10" y1="55.00" x2="521.60" y2="56.00" stroke="#d07018" stroke-width="1" />
<text x="518.40" y="54.80" fill="#d07018" font-size="2.6" >1</text>
<line x1="542.30" y1="56.00" x2="554.50" y2="127.40" stroke="#d07018" stroke-width="1" />
<line x1="538.80" y1="55.00" x2="542.30" y2="56.00" stroke="#d07018" stroke-width="1" />
<text x="539.10" y="54.80" fill="#d07018" font-size="2.6" >2</text>
<line x1="558.30" y1="56.00" x2="567.30" y2="133.80" stroke="#d07018" stroke-width="1" />
<line x1="554.80" y1="55.00" x2="558.30" y2="56.00" stroke="#d07018" stroke-width="1" />
<text x="555.10" y="54.80" fill="#d07018" font-size="2.6" >3</text>
<line x1="532.60" y1="321.70" x2="547.30" y2="284.00" stroke="#d07018" stroke-width="1" />
<text x="528.40" y="322.50" fill="#d07018" stroke="#d07018" stroke-width="0.35" font-size="3.2" font-weight="bold" >22</text>
<line x1="532.60" y1="334.80" x2="549.20" y2="307.40" stroke="#d07018" stroke-width="1" />
<text x="528.40" y="335.60" fill="#d07018" stroke="#d07018" stroke-width="0.35" font-size="3.2" font-weight="bold" >21</text>
<line x1="532.60" y1="345.60" x2="555.10" y2="304.50" stroke="#d07018" stroke-width="1" />
<text x="528.40" y="346.40" fill="#d07018" stroke="#d07018" stroke-width="0.35" font-size="3.2" font-weight="bold" >20</text>
<line x1="532.60" y1="358.30" x2="609.00" y2="366.60" stroke="#d07018" stroke-width="1" />
<text x="528.40" y="359.10" fill="#d07018" stroke="#d07018" stroke-width="0.35" font-size="3.2" font-weight="bold" >19</text>
<line x1="532.60" y1="367.00" x2="602.70" y2="380.00" stroke="#d07018" stroke-width="1" />
<text x="528.40" y="367.80" fill="#d07018" stroke="#d07018" stroke-width="0.35" font-size="3.2" font-weight="bold" >18</text>
<line x1="592.50" y1="68.00" x2="740.00" y2="43.30" stroke="#d07018" stroke-width="1" />
<text x="738.80" y="43.00" fill="#d07018" stroke="#d07018" stroke-width="0.35" font-size="3" font-weight="bold" >4</text>
<line x1="619.40" y1="75.40" x2="740.00" y2="55.00" stroke="#d07018" stroke-width="1" />
<text x="738.80" y="54.70" fill="#d07018" stroke="#d07018" stroke-width="0.35" font-size="3" font-weight="bold" >5</text>
<line x1="623.70" y1="90.00" x2="740.00" y2="66.00" stroke="#d07018" stroke-width="1" />
<text x="738.80" y="65.70" fill="#d07018" stroke="#d07018" stroke-width="0.35" font-size="3" font-weight="bold" >6</text>
<line x1="638.50" y1="94.40" x2="740.00" y2="77.20" stroke="#d07018" stroke-width="1" />
<text x="738.80" y="76.90" fill="#d07018" stroke="#d07018" stroke-width="0.35" font-size="3" font-weight="bold" >7</text>
<line x1="676.40" y1="133.60" x2="738.40" y2="83.60" stroke="#d07018" stroke-width="1" />
<text x="737.20" y="83.30" fill="#d07018" stroke="#d07018" stroke-width="0.35" font-size="3" font-weight="bold" >8</text>
<line x1="631.00" y1="311.40" x2="728.20" y2="298.40" stroke="#d07018" stroke-width="1" />
<text x="727.40" y="299.00" fill="#d07018" stroke="#d07018" stroke-width="0.35" font-size="3" font-weight="bold" >9</text>
<line x1="641.40" y1="359.50" x2="726.80" y2="311.00" stroke="#d07018" stroke-width="1" />
<text x="726.00" y="311.60" fill="#d07018" stroke="#d07018" stroke-width="0.35" font-size="3" font-weight="bold" >10</text>
<line x1="640.80" y1="372.80" x2="726.80" y2="323.30" stroke="#d07018" stroke-width="1" />
<text x="726.00" y="323.90" fill="#d07018" stroke="#d07018" stroke-width="0.35" font-size="3" font-weight="bold" >11</text>
<line x1="656.00" y1="367.00" x2="726.80" y2="337.80" stroke="#d07018" stroke-width="1" />
<text x="726.00" y="338.40" fill="#d07018" stroke="#d07018" stroke-width="0.35" font-size="3" font-weight="bold" >12</text>
<line x1="659.20" y1="369.00" x2="726.80" y2="349.80" stroke="#d07018" stroke-width="1" />
<text x="726.00" y="350.40" fill="#d07018" stroke="#d07018" stroke-width="0.35" font-size="3" font-weight="bold" >13</text>
<line x1="681.40" y1="368.40" x2="726.80" y2="360.00" stroke="#d07018" stroke-width="1" />
<text x="726.00" y="360.60" fill="#d07018" stroke="#d07018" stroke-width="0.35" font-size="3" font-weight="bold" >14</text>
<line x1="645.80" y1="377.30" x2="726.80" y2="367.80" stroke="#d07018" stroke-width="1" />
<text x="726.00" y="368.40" fill="#d07018" stroke="#d07018" stroke-width="0.35" font-size="3" font-weight="bold" >15</text>
<polyline points="600.00,179.80 517.60,181.30" fill="none" stroke="#d07018" stroke-width="1" stroke-dasharray="5 2"/>
<polyline points="520.00,181.30 520.00,260.20 614.80,258.30" fill="none" stroke="#d07018" stroke-width="1" />
<text x="512" y="219.6" fill="#d07018" stroke="#d07018" stroke-width="0.45" font-size="3.6" font-weight="bold" transform="rotate(-90 519 218)">ø60H7</text>
<polyline points="582.40,158.50 576.30,174.80 561.00,175.20" fill="none" stroke="#d07018" stroke-width="1" stroke-dasharray="4 1.5"/>
<text x="560.5" y="174.4" fill="#d07018" stroke="#d07018" stroke-width="0.45" font-size="3.8" font-weight="bold">Morse 5</text>
<line x1="573.20" y1="471.57" x2="691.70" y2="471.57" stroke="#7cc0ff" stroke-width="1" />
<line x1="573.20" y1="475.54" x2="691.70" y2="475.54" stroke="#7cc0ff" stroke-width="1" />
<line x1="573.20" y1="479.51" x2="691.70" y2="479.51" stroke="#7cc0ff" stroke-width="1" />
<line x1="573.20" y1="483.47" x2="691.70" y2="483.47" stroke="#7cc0ff" stroke-width="1" />
<line x1="573.20" y1="487.44" x2="691.70" y2="487.44" stroke="#7cc0ff" stroke-width="1" />
<line x1="573.20" y1="491.41" x2="691.70" y2="491.41" stroke="#7cc0ff" stroke-width="1" />
<line x1="573.20" y1="495.38" x2="691.70" y2="495.38" stroke="#7cc0ff" stroke-width="1" />
<line x1="573.20" y1="499.35" x2="691.70" y2="499.35" stroke="#7cc0ff" stroke-width="1" />
<line x1="573.20" y1="503.32" x2="691.70" y2="503.32" stroke="#7cc0ff" stroke-width="1" />
<line x1="573.20" y1="507.28" x2="691.70" y2="507.28" stroke="#7cc0ff" stroke-width="1" />
<line x1="573.20" y1="511.25" x2="691.70" y2="511.25" stroke="#7cc0ff" stroke-width="1" />
<line x1="573.20" y1="515.22" x2="691.70" y2="515.22" stroke="#7cc0ff" stroke-width="1" />
<line x1="573.20" y1="519.19" x2="691.70" y2="519.19" stroke="#7cc0ff" stroke-width="1" />
<line x1="573.20" y1="523.16" x2="691.70" y2="523.16" stroke="#7cc0ff" stroke-width="1" />
<line x1="573.20" y1="527.13" x2="691.70" y2="527.13" stroke="#7cc0ff" stroke-width="1" />
<line x1="573.20" y1="531.09" x2="691.70" y2="531.09" stroke="#7cc0ff" stroke-width="1" />
<line x1="573.20" y1="535.06" x2="691.70" y2="535.06" stroke="#7cc0ff" stroke-width="1" />
<line x1="573.20" y1="539.03" x2="691.70" y2="539.03" stroke="#7cc0ff" stroke-width="1" />
<line x1="579.60" y1="467.60" x2="579.60" y2="543.00" stroke="#7cc0ff" stroke-width="1" />
<line x1="605.70" y1="467.60" x2="605.70" y2="543.00" stroke="#7cc0ff" stroke-width="1" />
<line x1="633.20" y1="467.60" x2="633.20" y2="543.00" stroke="#7cc0ff" stroke-width="1" />
<line x1="641.20" y1="467.60" x2="641.20" y2="543.00" stroke="#7cc0ff" stroke-width="1" />
<line x1="664.50" y1="467.60" x2="664.50" y2="543.00" stroke="#7cc0ff" stroke-width="1" />
<line x1="670.40" y1="467.60" x2="670.40" y2="543.00" stroke="#7cc0ff" stroke-width="1" />
<line x1="678.90" y1="467.60" x2="678.90" y2="543.00" stroke="#7cc0ff" stroke-width="1" />
<line x1="691.70" y1="467.60" x2="691.70" y2="543.00" stroke="#7cc0ff" stroke-width="1" />
<line x1="573.20" y1="467.60" x2="573.20" y2="543.00" stroke="#ffffff" stroke-width="1" />
<line x1="573.20" y1="467.60" x2="691.70" y2="467.60" stroke="#ffffff" stroke-width="1" />
<text x="575.20" y="471.27" fill="#7cc0ff" stroke="#7cc0ff" stroke-width="0.15" font-size="2.6" font-weight="bold" >19</text>
<text x="610.50" y="471.57" fill="#7cc0ff" stroke="#7cc0ff" stroke-width="0.55" font-size="4.4" font-weight="bold" >压板</text>
<text x="636.00" y="471.27" fill="#7cc0ff" stroke="#7cc0ff" stroke-width="0.2" font-size="2.8" font-weight="bold" >2</text>
<text x="575.20" y="475.24" fill="#7cc0ff" stroke="#7cc0ff" stroke-width="0.15" font-size="2.6" font-weight="bold" >18</text>
<text x="585.00" y="475.24" fill="#7cc0ff" stroke="#7cc0ff" stroke-width="0.5" font-size="3.6" font-weight="bold" >GB6170</text>
<text x="610.50" y="475.54" fill="#7cc0ff" stroke="#7cc0ff" stroke-width="0.55" font-size="4.4" font-weight="bold" >螺母M12</text>
<text x="636.00" y="475.24" fill="#7cc0ff" stroke="#7cc0ff" stroke-width="0.2" font-size="2.8" font-weight="bold" >1</text>
<text x="575.20" y="479.21" fill="#7cc0ff" stroke="#7cc0ff" stroke-width="0.15" font-size="2.6" font-weight="bold" >17</text>
<text x="585.00" y="479.21" fill="#7cc0ff" stroke="#7cc0ff" stroke-width="0.5" font-size="3.6" font-weight="bold" >GB97.1</text>
<text x="610.50" y="479.51" fill="#7cc0ff" stroke="#7cc0ff" stroke-width="0.55" font-size="4.4" font-weight="bold" >垫圈12</text>
<text x="636.00" y="479.21" fill="#7cc0ff" stroke="#7cc0ff" stroke-width="0.2" font-size="2.8" font-weight="bold" >1</text>
<text x="575.20" y="483.17" fill="#7cc0ff" stroke="#7cc0ff" stroke-width="0.15" font-size="2.6" font-weight="bold" >16</text>
<text x="610.50" y="483.47" fill="#7cc0ff" stroke="#7cc0ff" stroke-width="0.55" font-size="4.4" font-weight="bold" >T形螺栓</text>
<text x="636.00" y="483.17" fill="#7cc0ff" stroke="#7cc0ff" stroke-width="0.2" font-size="2.8" font-weight="bold" >2</text>
<text x="575.20" y="487.14" fill="#7cc0ff" stroke="#7cc0ff" stroke-width="0.15" font-size="2.6" font-weight="bold" >15</text>
<text x="610.50" y="487.44" fill="#7cc0ff" stroke="#7cc0ff" stroke-width="0.55" font-size="4.4" font-weight="bold" >定位销</text>
<text x="636.00" y="487.14" fill="#7cc0ff" stroke="#7cc0ff" stroke-width="0.2" font-size="2.8" font-weight="bold" >1</text>
<text x="575.20" y="491.11" fill="#7cc0ff" stroke="#7cc0ff" stroke-width="0.15" font-size="2.6" font-weight="bold" >14</text>
<text x="636.00" y="491.11" fill="#7cc0ff" stroke="#7cc0ff" stroke-width="0.2" font-size="2.8" font-weight="bold" >1</text>
<text x="646.00" y="491.11" fill="#7cc0ff" stroke="#7cc0ff" stroke-width="0.5" font-size="4" font-weight="bold" >HT200</text>
<text x="575.20" y="495.08" fill="#7cc0ff" stroke="#7cc0ff" stroke-width="0.15" font-size="2.6" font-weight="bold" >13</text>
<text x="585.00" y="495.08" fill="#7cc0ff" stroke="#7cc0ff" stroke-width="0.5" font-size="3.6" font-weight="bold" >JJ-13</text>
<text x="610.50" y="495.38" fill="#7cc0ff" stroke="#7cc0ff" stroke-width="0.55" font-size="4.4" font-weight="bold" >手柄</text>
<text x="636.00" y="495.08" fill="#7cc0ff" stroke="#7cc0ff" stroke-width="0.2" font-size="2.8" font-weight="bold" >2</text>
<text x="646.00" y="495.08" fill="#7cc0ff" stroke="#7cc0ff" stroke-width="0.5" font-size="4" font-weight="bold" ></text>
<text x="575.20" y="499.05" fill="#7cc0ff" stroke="#7cc0ff" stroke-width="0.15" font-size="2.6" font-weight="bold" >12</text>
<text x="585.00" y="499.05" fill="#7cc0ff" stroke="#7cc0ff" stroke-width="0.5" font-size="3.6" font-weight="bold" >JJ-12</text>
<text x="610.50" y="499.35" fill="#7cc0ff" stroke="#7cc0ff" stroke-width="0.55" font-size="4.4" font-weight="bold" >衬套</text>
<text x="636.00" y="499.05" fill="#7cc0ff" stroke="#7cc0ff" stroke-width="0.2" font-size="2.8" font-weight="bold" >1</text>
<text x="575.20" y="503.02" fill="#7cc0ff" stroke="#7cc0ff" stroke-width="0.15" font-size="2.6" font-weight="bold" >11</text>
<text x="610.50" y="503.32" fill="#7cc0ff" stroke="#7cc0ff" stroke-width="0.55" font-size="4.4" font-weight="bold" >螺钉M6</text>
<text x="636.00" y="503.02" fill="#7cc0ff" stroke="#7cc0ff" stroke-width="0.2" font-size="2.8" font-weight="bold" >1</text>
<text x="575.20" y="506.98" fill="#7cc0ff" stroke="#7cc0ff" stroke-width="0.15" font-size="2.6" font-weight="bold" >10</text>
<text x="585.00" y="506.98" fill="#7cc0ff" stroke="#7cc0ff" stroke-width="0.5" font-size="3.6" font-weight="bold" >JJ-10</text>
<text x="610.50" y="507.28" fill="#7cc0ff" stroke="#7cc0ff" stroke-width="0.55" font-size="4.4" font-weight="bold" >过渡盘</text>
<text x="636.00" y="506.98" fill="#7cc0ff" stroke="#7cc0ff" stroke-width="0.2" font-size="2.8" font-weight="bold" >2</text>
<text x="650.00" y="506.98" fill="#7cc0ff" stroke="#7cc0ff" stroke-width="0.3" font-size="3" font-weight="bold" >45</text>
<text x="575.20" y="510.95" fill="#7cc0ff" stroke="#7cc0ff" stroke-width="0.15" font-size="2.6" font-weight="bold" >9</text>
<text x="585.00" y="510.95" fill="#7cc0ff" stroke="#7cc0ff" stroke-width="0.5" font-size="3.6" font-weight="bold" >GB5782</text>
<text x="636.00" y="510.95" fill="#7cc0ff" stroke="#7cc0ff" stroke-width="0.2" font-size="2.8" font-weight="bold" >1</text>
<text x="650.00" y="510.95" fill="#7cc0ff" stroke="#7cc0ff" stroke-width="0.3" font-size="3" font-weight="bold" >45</text>
<text x="575.20" y="514.92" fill="#7cc0ff" stroke="#7cc0ff" stroke-width="0.15" font-size="2.6" font-weight="bold" >8</text>
<text x="610.50" y="515.22" fill="#7cc0ff" stroke="#7cc0ff" stroke-width="0.55" font-size="4.4" font-weight="bold" >垫圈10</text>
<text x="636.00" y="514.92" fill="#7cc0ff" stroke="#7cc0ff" stroke-width="0.2" font-size="2.8" font-weight="bold" >1</text>
<text x="575.20" y="518.89" fill="#7cc0ff" stroke="#7cc0ff" stroke-width="0.15" font-size="2.6" font-weight="bold" >7</text>
<text x="585.00" y="518.89" fill="#7cc0ff" stroke="#7cc0ff" stroke-width="0.5" font-size="3.6" font-weight="bold" >K11-250</text>
<text x="610.50" y="519.19" fill="#7cc0ff" stroke="#7cc0ff" stroke-width="0.55" font-size="4.4" font-weight="bold" >三爪卡盘</text>
<text x="636.00" y="518.89" fill="#7cc0ff" stroke="#7cc0ff" stroke-width="0.2" font-size="2.8" font-weight="bold" >2</text>
<text x="575.20" y="522.86" fill="#7cc0ff" stroke="#7cc0ff" stroke-width="0.15" font-size="2.6" font-weight="bold" >6</text>
<text x="585.00" y="522.86" fill="#7cc0ff" stroke="#7cc0ff" stroke-width="0.5" font-size="3.6" font-weight="bold" >JJ-06</text>
<text x="610.50" y="523.16" fill="#7cc0ff" stroke="#7cc0ff" stroke-width="0.55" font-size="4.4" font-weight="bold" >工件</text>
<text x="636.00" y="522.86" fill="#7cc0ff" stroke="#7cc0ff" stroke-width="0.2" font-size="2.8" font-weight="bold" >1</text>
<text x="575.20" y="526.83" fill="#7cc0ff" stroke="#7cc0ff" stroke-width="0.15" font-size="2.6" font-weight="bold" >5</text>
<text x="610.50" y="527.13" fill="#7cc0ff" stroke="#7cc0ff" stroke-width="0.55" font-size="4.4" font-weight="bold" >卡爪</text>
<text x="636.00" y="526.83" fill="#7cc0ff" stroke="#7cc0ff" stroke-width="0.2" font-size="2.8" font-weight="bold" >1</text>
<text x="650.00" y="526.83" fill="#7cc0ff" stroke="#7cc0ff" stroke-width="0.3" font-size="3" font-weight="bold" >45</text>
<text x="575.20" y="530.79" fill="#7cc0ff" stroke="#7cc0ff" stroke-width="0.15" font-size="2.6" font-weight="bold" >4</text>
<text x="585.00" y="530.79" fill="#7cc0ff" stroke="#7cc0ff" stroke-width="0.5" font-size="3.6" font-weight="bold" >JJ-04</text>
<text x="610.50" y="531.09" fill="#7cc0ff" stroke="#7cc0ff" stroke-width="0.55" font-size="4.4" font-weight="bold" >夹具体</text>
<text x="636.00" y="530.79" fill="#7cc0ff" stroke="#7cc0ff" stroke-width="0.2" font-size="2.8" font-weight="bold" >2</text>
<text x="575.20" y="534.76" fill="#7cc0ff" stroke="#7cc0ff" stroke-width="0.15" font-size="2.6" font-weight="bold" >3</text>
<text x="585.00" y="534.76" fill="#7cc0ff" stroke="#7cc0ff" stroke-width="0.5" font-size="3.6" font-weight="bold" >GB70</text>
<text x="636.00" y="534.76" fill="#7cc0ff" stroke="#7cc0ff" stroke-width="0.2" font-size="2.8" font-weight="bold" >1</text>
<text x="575.20" y="538.73" fill="#7cc0ff" stroke="#7cc0ff" stroke-width="0.15" font-size="2.6" font-weight="bold" >2</text>
<text x="585.00" y="538.73" fill="#7cc0ff" stroke="#7cc0ff" stroke-width="0.5" font-size="3.6" font-weight="bold" >GB119</text>
<text x="610.50" y="539.03" fill="#7cc0ff" stroke="#7cc0ff" stroke-width="0.55" font-size="4.4" font-weight="bold" >圆柱销</text>
<text x="636.00" y="538.73" fill="#7cc0ff" stroke="#7cc0ff" stroke-width="0.2" font-size="2.8" font-weight="bold" >1</text>
<text x="650.00" y="538.73" fill="#7cc0ff" stroke="#7cc0ff" stroke-width="0.3" font-size="3" font-weight="bold" >45</text>
<text x="575.20" y="542.70" fill="#7cc0ff" stroke="#7cc0ff" stroke-width="0.15" font-size="2.6" font-weight="bold" >1</text>
<text x="585.00" y="542.70" fill="#7cc0ff" stroke="#7cc0ff" stroke-width="0.5" font-size="3.6" font-weight="bold" >JJ-01</text>
<text x="610.50" y="543.00" fill="#7cc0ff" stroke="#7cc0ff" stroke-width="0.55" font-size="4.4" font-weight="bold" >法兰盘</text>
<text x="636.00" y="542.70" fill="#7cc0ff" stroke="#7cc0ff" stroke-width="0.2" font-size="2.8" font-weight="bold" >2</text>
<text x="650.00" y="542.70" fill="#7cc0ff" stroke="#7cc0ff" stroke-width="0.3" font-size="3" font-weight="bold" >45</text>
<line x1="692.10" y1="478.50" x2="809.50" y2="478.50" stroke="#7cc0ff" stroke-width="1" />
<line x1="692.10" y1="483.30" x2="809.50" y2="483.30" stroke="#7cc0ff" stroke-width="1" />
<line x1="692.10" y1="488.00" x2="809.50" y2="488.00" stroke="#7cc0ff" stroke-width="1" />
<line x1="692.10" y1="492.40" x2="809.50" y2="492.40" stroke="#7cc0ff" stroke-width="1" />
<line x1="692.10" y1="497.00" x2="809.50" y2="497.00" stroke="#7cc0ff" stroke-width="1" />
<line x1="697.50" y1="474.00" x2="697.50" y2="505.70" stroke="#7cc0ff" stroke-width="1" />
<line x1="723.60" y1="474.00" x2="723.60" y2="505.70" stroke="#7cc0ff" stroke-width="1" />
<line x1="750.40" y1="474.00" x2="750.40" y2="505.70" stroke="#7cc0ff" stroke-width="1" />
<line x1="760.00" y1="474.00" x2="760.00" y2="505.70" stroke="#7cc0ff" stroke-width="1" />
<line x1="782.50" y1="474.00" x2="782.50" y2="505.70" stroke="#7cc0ff" stroke-width="1" />
<line x1="788.50" y1="474.00" x2="788.50" y2="505.70" stroke="#7cc0ff" stroke-width="1" />
<line x1="796.50" y1="474.00" x2="796.50" y2="505.70" stroke="#7cc0ff" stroke-width="1" />
<line x1="692.10" y1="474.00" x2="809.50" y2="474.00" stroke="#ffffff" stroke-width="1" />
<line x1="692.10" y1="505.70" x2="809.50" y2="505.70" stroke="#ffffff" stroke-width="1" />
<line x1="692.10" y1="474.00" x2="692.10" y2="543.00" stroke="#ffffff" stroke-width="1" />
<line x1="691.70" y1="467.60" x2="691.70" y2="474.00" stroke="#ffffff" stroke-width="1" />
<text x="693.30" y="478.10" fill="#7cc0ff" stroke="#7cc0ff" stroke-width="0.2" font-size="2.8" font-weight="bold" >23</text>
<text x="727.00" y="478.50" fill="#7cc0ff" stroke="#7cc0ff" stroke-width="0.6" font-size="4.6" font-weight="bold" >支承</text>
<text x="753.00" y="478.10" fill="#7cc0ff" stroke="#7cc0ff" stroke-width="0.25" font-size="2.8" font-weight="bold" >1</text>
<text x="693.30" y="482.90" fill="#7cc0ff" stroke="#7cc0ff" stroke-width="0.2" font-size="2.8" font-weight="bold" >22</text>
<text x="700.00" y="482.90" fill="#7cc0ff" stroke="#7cc0ff" stroke-width="0.5" font-size="4" font-weight="bold" >GB/T70</text>
<text x="727.00" y="483.30" fill="#7cc0ff" stroke="#7cc0ff" stroke-width="0.6" font-size="4.6" font-weight="bold" >螺钉M10</text>
<text x="753.00" y="482.90" fill="#7cc0ff" stroke="#7cc0ff" stroke-width="0.25" font-size="2.8" font-weight="bold" >1</text>
<text x="693.30" y="487.60" fill="#7cc0ff" stroke="#7cc0ff" stroke-width="0.2" font-size="2.8" font-weight="bold" >21</text>
<text x="700.00" y="487.60" fill="#7cc0ff" stroke="#7cc0ff" stroke-width="0.5" font-size="4" font-weight="bold" >JJ-21</text>
<text x="727.00" y="488.00" fill="#7cc0ff" stroke="#7cc0ff" stroke-width="0.6" font-size="4.6" font-weight="bold" >挡块座</text>
<text x="753.00" y="487.60" fill="#7cc0ff" stroke="#7cc0ff" stroke-width="0.25" font-size="2.8" font-weight="bold" >1</text>
<text x="693.30" y="492.00" fill="#7cc0ff" stroke="#7cc0ff" stroke-width="0.2" font-size="2.8" font-weight="bold" >20</text>
<text x="727.00" y="492.40" fill="#7cc0ff" stroke="#7cc0ff" stroke-width="0.6" font-size="4.6" font-weight="bold" >压紧钉</text>
<text x="753.00" y="492.00" fill="#7cc0ff" stroke="#7cc0ff" stroke-width="0.25" font-size="2.8" font-weight="bold" >1</text>
<text x="693.30" y="496.60" fill="#7cc0ff" stroke="#7cc0ff" stroke-width="0.2" font-size="2.8" font-weight="bold" ></text>
<text x="753.00" y="496.60" fill="#7cc0ff" stroke="#7cc0ff" stroke-width="0.25" font-size="2.8" font-weight="bold" >1</text>
<text x="767.00" y="484.50" fill="#7cc0ff" stroke="#7cc0ff" stroke-width="0.6" font-size="5" font-weight="bold" >45</text>
<text x="796.00" y="490.80" fill="#7cc0ff" stroke="#7cc0ff" stroke-width="0.6" font-size="4.4" font-weight="bold" >外购件</text>
<text x="692.60" y="502.00" fill="#7cc0ff" stroke="#7cc0ff" stroke-width="0.5" font-size="4.5" font-weight="bold" >序</text>
<text x="705.00" y="503.50" fill="#7cc0ff" stroke="#7cc0ff" stroke-width="0.4" font-size="3.6" font-weight="bold" >代号</text>
<text x="731.00" y="501.00" fill="#7cc0ff" stroke="#7cc0ff" stroke-width="0.5" font-size="4.2" font-weight="bold" >名称</text>
<text x="750.50" y="503.00" fill="#ffffff" stroke="#ffffff" stroke-width="0.5" font-size="4.6" font-weight="bold" >数</text>
<text x="766.50" y="503.00" fill="#ffffff" stroke="#ffffff" stroke-width="0.55" font-size="4.6" font-weight="bold" >材</text>
<text x="783.00" y="501.50" fill="#7cc0ff" stroke="#7cc0ff" stroke-width="0.55" font-size="4.6" font-weight="bold" >单总</text>
<text x="798.50" y="503.00" fill="#ffffff" stroke="#ffffff" stroke-width="0.5" font-size="4.6" font-weight="bold" >备注</text>
<line x1="692.10" y1="510.36" x2="744.60" y2="510.36" stroke="#ffffff" stroke-width="1" />
<line x1="692.10" y1="515.02" x2="744.60" y2="515.02" stroke="#ffffff" stroke-width="1" />
<line x1="692.10" y1="519.68" x2="744.60" y2="519.68" stroke="#ffffff" stroke-width="1" />
<line x1="692.10" y1="524.34" x2="744.60" y2="524.34" stroke="#ffffff" stroke-width="1" />
<line x1="692.10" y1="529.00" x2="744.60" y2="529.00" stroke="#ffffff" stroke-width="1" />
<line x1="692.10" y1="533.66" x2="744.60" y2="533.66" stroke="#ffffff" stroke-width="1" />
<line x1="692.10" y1="538.32" x2="744.60" y2="538.32" stroke="#ffffff" stroke-width="1" />
<line x1="699.10" y1="505.70" x2="699.10" y2="543.00" stroke="#ffffff" stroke-width="1" />
<line x1="704.90" y1="505.70" x2="704.90" y2="543.00" stroke="#ffffff" stroke-width="1" />
<line x1="712.40" y1="505.70" x2="712.40" y2="543.00" stroke="#ffffff" stroke-width="1" />
<line x1="725.20" y1="505.70" x2="725.20" y2="543.00" stroke="#ffffff" stroke-width="1" />
<line x1="733.60" y1="505.70" x2="733.60" y2="543.00" stroke="#ffffff" stroke-width="1" />
<line x1="744.60" y1="505.70" x2="744.60" y2="543.00" stroke="#ffffff" stroke-width="1" />
<line x1="776.90" y1="505.70" x2="776.90" y2="543.00" stroke="#ffffff" stroke-width="1" />
<line x1="776.90" y1="518.50" x2="809.50" y2="518.50" stroke="#ffffff" stroke-width="1" />
<line x1="776.90" y1="531.60" x2="809.50" y2="531.60" stroke="#ffffff" stroke-width="1" />
<line x1="744.60" y1="531.60" x2="776.90" y2="531.60" stroke="#ffffff" stroke-width="1" />
<line x1="744.60" y1="537.30" x2="769.30" y2="537.30" stroke="#ffffff" stroke-width="1" />
<line x1="769.30" y1="531.60" x2="769.30" y2="543.00" stroke="#ffffff" stroke-width="1" />
<line x1="749.00" y1="531.60" x2="749.00" y2="537.30" stroke="#ffffff" stroke-width="1" />
<line x1="753.50" y1="531.60" x2="753.50" y2="537.30" stroke="#ffffff" stroke-width="1" />
<line x1="758.00" y1="531.60" x2="758.00" y2="537.30" stroke="#ffffff" stroke-width="1" />
<text x="692.80" y="522.80" fill="#ffffff" stroke="#ffffff" stroke-width="0.5" font-size="4.6" font-weight="bold" >标记处数</text>
<text x="714.00" y="522.80" fill="#ffffff" stroke="#ffffff" stroke-width="0.5" font-size="4.6" font-weight="bold" >更改文件号</text>
<text x="734.50" y="522.80" fill="#ffffff" stroke="#ffffff" stroke-width="0.5" font-size="4.4" font-weight="bold" >签字</text>
<text x="693.00" y="528.20" fill="#ffffff" stroke="#ffffff" stroke-width="0.45" font-size="4" font-weight="bold" >设计</text>
<text x="701.50" y="528.50" fill="#ffffff" stroke="#ffffff" stroke-width="0.4" font-size="3.4" font-weight="bold" >日期</text>
<text x="692.80" y="537.50" fill="#ffffff" stroke="#ffffff" stroke-width="0.5" font-size="4.4" font-weight="bold" >审</text>
<text x="699.80" y="536.80" fill="#d07018" stroke="#d07018" stroke-width="0.5" font-size="4.4" font-weight="bold" >工艺</text>
<text x="692.80" y="542.20" fill="#ffffff" stroke="#ffffff" stroke-width="0.5" font-size="4.2" font-weight="bold" >批</text>
<text x="726.50" y="541.80" fill="#ffffff" stroke="#ffffff" stroke-width="0.5" font-size="4.4" font-weight="bold" >日</text>
<text x="746.50" y="528.80" fill="#ffffff" stroke="#ffffff" stroke-width="0.5" font-size="4.4" font-weight="bold" >阶段标</text>
<text x="760.50" y="528.80" fill="#ffffff" stroke="#ffffff" stroke-width="0.5" font-size="4.4" font-weight="bold" >重</text>
<text x="768.50" y="529.50" fill="#ffffff" stroke="#ffffff" stroke-width="0.5" font-size="4.4" font-weight="bold" >比</text>
<text x="770.50" y="534.30" fill="#ffffff" stroke="#ffffff" stroke-width="0.2" font-size="2.8" font-weight="bold" >1:1</text>
<text x="749.50" y="541.30" fill="#7cc0ff" stroke="#7cc0ff" stroke-width="0.55" font-size="4.6" font-weight="bold" >共张</text>
<text x="760.00" y="541.30" fill="#7cc0ff" stroke="#7cc0ff" stroke-width="0.55" font-size="4.6" font-weight="bold" >第张</text>
<text x="779.30" y="511.00" fill="#ffffff" stroke="#ffffff" stroke-width="0.5" font-size="4.4" font-weight="bold" >车床专用夹具</text>
<text x="783.00" y="516.30" fill="#ffffff" stroke="#ffffff" stroke-width="0.5" font-size="4.2" font-weight="bold" >过渡盘夹具</text>
<text x="783.20" y="524.30" fill="#ffffff" stroke="#ffffff" stroke-width="0.55" font-size="4.4" font-weight="bold" >JJ-00-0</text>
</svg>
</body></html>
